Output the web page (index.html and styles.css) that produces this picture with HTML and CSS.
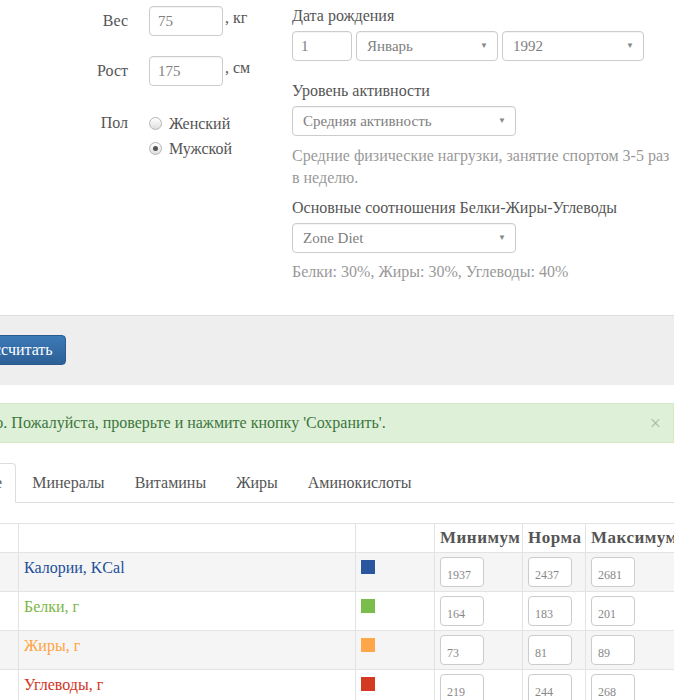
FILE: index.html
```html
<!DOCTYPE html>
<html lang="ru">
<head>
    <meta charset="UTF-8">
    <title>Калькулятор нормы</title>
    <link rel="stylesheet" href="styles.css">
</head>
<body>
    <div class="calc">
        <div class="body-params">
            <div class="field-row">
                <label class="field-label" for="weight">Вес</label>
                <input class="form-input short" id="weight" type="text" value="75">
                <span class="unit">, кг</span>
            </div>
            <div class="field-row">
                <label class="field-label" for="height">Рост</label>
                <input class="form-input short" id="height" type="text" value="175">
                <span class="unit">, см</span>
            </div>
            <div class="field-row gender">
                <span class="field-label">Пол</span>
                <div class="radio-list">
                    <label class="radio"><input type="radio" name="sex"> Женский</label>
                    <label class="radio"><input type="radio" name="sex" checked> Мужской</label>
                </div>
            </div>
        </div>

        <div class="profile">
            <div class="group-title">Дата рождения</div>
            <div class="date-row">
                <input class="form-input day" type="text" value="1">
                <div class="select-wrap month">
                    <select class="form-select"><option>Январь</option></select>
                </div>
                <div class="select-wrap year">
                    <select class="form-select"><option>1992</option></select>
                </div>
            </div>

            <div class="group-title spaced">Уровень активности</div>
            <div class="select-wrap wide">
                <select class="form-select"><option>Средняя активность</option></select>
            </div>
            <p class="help">Средние физические нагрузки, занятие спортом 3-5 раз в неделю.</p>

            <div class="group-title">Основные соотношения Белки-Жиры-Углеводы</div>
            <div class="select-wrap wide">
                <select class="form-select"><option>Zone Diet</option></select>
            </div>
            <p class="help ratio">Белки: 30%, Жиры: 30%, Углеводы: 40%</p>
        </div>
    </div>

    <div class="well">
        <button class="btn-primary" type="button">Рассчитать</button>
    </div>

    <div class="alert">
        <span class="alert-text">Рассчитано. Пожалуйста, проверьте и нажмите кнопку 'Сохранить'.</span>
        <button class="close" type="button">&times;</button>
    </div>

    <ul class="tabs">
        <li class="tab active">Основные</li>
        <li class="tab">Минералы</li>
        <li class="tab">Витамины</li>
        <li class="tab">Жиры</li>
        <li class="tab">Аминокислоты</li>
    </ul>

    <table class="norms">
        <thead>
            <tr>
                <th class="col-id"></th>
                <th class="col-name"></th>
                <th class="col-color"></th>
                <th class="col-min">Минимум</th>
                <th class="col-norm">Норма</th>
                <th class="col-max">Максимум</th>
            </tr>
        </thead>
        <tbody>
            <tr>
                <td></td>
                <td class="name kcal">Калории, KCal</td>
                <td><span class="swatch kcal-bg"></span></td>
                <td><input class="num-input" type="text" value="1937"></td>
                <td><input class="num-input" type="text" value="2437"></td>
                <td><input class="num-input" type="text" value="2681"></td>
            </tr>
            <tr>
                <td></td>
                <td class="name protein">Белки, г</td>
                <td><span class="swatch protein-bg"></span></td>
                <td><input class="num-input" type="text" value="164"></td>
                <td><input class="num-input" type="text" value="183"></td>
                <td><input class="num-input" type="text" value="201"></td>
            </tr>
            <tr>
                <td></td>
                <td class="name fat">Жиры, г</td>
                <td><span class="swatch fat-bg"></span></td>
                <td><input class="num-input" type="text" value="73"></td>
                <td><input class="num-input" type="text" value="81"></td>
                <td><input class="num-input" type="text" value="89"></td>
            </tr>
            <tr>
                <td></td>
                <td class="name carbs">Углеводы, г</td>
                <td><span class="swatch carbs-bg"></span></td>
                <td><input class="num-input" type="text" value="219"></td>
                <td><input class="num-input" type="text" value="244"></td>
                <td><input class="num-input" type="text" value="268"></td>
            </tr>
        </tbody>
    </table>
</body>
</html>
```

FILE: styles.css
```css
html, body {
    overflow: hidden;
}
body {
    margin: 0;
    font-family: "Liberation Serif", Tinos, serif;
    font-size: 16px;
    color: #555;
    background: #fff;
}
input, select, button {
    font-family: inherit;
}

/* top form */
.calc {
    display: flex;
    padding-top: 6px;
    height: 309px;
}
.body-params {
    width: 292px;
    flex-shrink: 0;
}
.field-row {
    display: grid;
    grid-template-columns: 128px 74px auto;
    column-gap: 21px;
    align-items: center;
    margin-bottom: 20px;
}
.field-label {
    text-align: right;
}
.unit {
    margin-left: -19px;
    margin-top: -6px;
}
.form-input, .form-select {
    box-sizing: border-box;
    height: 30px;
    padding: 4px 8px;
    border: 1px solid #ccc;
    border-radius: 4px;
    font-size: 15px;
    color: #808080;
    background: #fff;
    box-shadow: inset 0 1px 1px rgba(0, 0, 0, 0.05);
}
.form-input.short {
    width: 74px;
}
.field-row.gender {
    align-items: start;
    margin-top: 25px;
}
.gender .field-label {
    line-height: 24px;
}
.radio-list {
    display: flex;
    flex-direction: column;
}
.radio {
    display: flex;
    align-items: center;
    height: 25px;
    white-space: nowrap;
}
.radio input {
    appearance: none;
    flex-shrink: 0;
    box-sizing: border-box;
    width: 13px;
    height: 13px;
    margin: 0 7px 0 0;
    border: 1px solid #b5b5b5;
    border-radius: 50%;
    background: linear-gradient(#fff, #dedede);
    position: relative;
}
.radio input:checked::after {
    content: "";
    position: absolute;
    left: 3px;
    top: 3px;
    width: 5px;
    height: 5px;
    border-radius: 50%;
    background: #555;
}

.profile {
    width: 384px;
    flex-shrink: 0;
}
.group-title {
    line-height: 20px;
    margin-bottom: 5px;
}
.group-title.spaced {
    margin-top: 20px;
}
.date-row {
    display: flex;
    gap: 4px;
}
.form-input.day {
    width: 60px;
}
.select-wrap {
    position: relative;
}
.select-wrap::after {
    content: "\25BC";
    position: absolute;
    right: 10px;
    top: 10px;
    font-size: 8px;
    color: #888;
    pointer-events: none;
}
.form-select {
    appearance: none;
    width: 100%;
    padding-left: 10px;
}
.month, .year {
    width: 142px;
}
.wide {
    width: 224px;
}
.help {
    margin: 9px 0 9px;
    line-height: 22px;
    color: #999;
}
.help.ratio {
    margin-top: 8px;
}

/* recalc bar */
.well {
    background: #eee;
    border-top: 1px solid #ddd;
    padding: 19px 0 20px;
}
.btn-primary {
    margin-left: -35px;
    height: 30px;
    padding: 4px 12px;
    font-size: 16px;
    color: #fff;
    border: 1px solid #2a5a8e;
    border-radius: 4px;
    background: linear-gradient(#3d7ab8, #2c6096);
}

.alert {
    display: flex;
    justify-content: space-between;
    align-items: center;
    margin: 18px 0 0 -90px;
    height: 40px;
    box-sizing: border-box;
    padding: 0 12px 0 15px;
    background: #dff0d8;
    border: 1px solid #d6e9c6;
    color: #3c763d;
    white-space: nowrap;
}
.close {
    border: none;
    background: none;
    padding: 0;
    font-size: 20px;
    color: #aab8a4;
}

/* tabs */
.tabs {
    display: flex;
    list-style: none;
    margin: 20px 0 0 -81px;
    padding: 0;
    border-bottom: 1px solid #ddd;
}
.tab {
    padding: 0 13px;
    line-height: 38px;
    margin-right: 2px;
    border: 1px solid transparent;
    border-radius: 4px 4px 0 0;
    margin-bottom: -1px;
    white-space: nowrap;
}
.tab.active {
    background: #fff;
    border-color: #ddd #ddd #fff;
}

/* table */
.norms {
    margin: 20px 0 0 -100px;
    border-collapse: collapse;
    table-layout: fixed;
    width: 780px;
}
.norms th, .norms td {
    box-sizing: border-box;
    border: 1px solid #e3e3e3;
    padding: 4px 5px;
    height: 39px;
    vertical-align: top;
    text-align: left;
}
.norms th {
    height: 29px;
    font-size: 17px;
    font-weight: bold;
    letter-spacing: 0.5px;
    line-height: 20px;
    padding: 4px 5px 3px;
    white-space: nowrap;
}
.norms tbody tr:nth-child(odd) {
    background: #f5f5f5;
}
.col-id { width: 118px; }
.col-name { width: 337px; }
.col-color { width: 79px; }
.col-min { width: 88px; }
.col-norm { width: 63px; }
.col-max { width: 95px; }
.name {
    line-height: 22px;
    padding-top: 3px;
}
.kcal { color: #234f98; }
.protein { color: #7ab648; }
.fat { color: #ffa443; }
.carbs { color: #d1331c; }
.swatch {
    display: block;
    width: 14px;
    height: 14px;
    margin-top: 3px;
}
.kcal-bg { background: #2a56a0; }
.protein-bg { background: #7bbd4a; }
.fat-bg { background: #ffa54a; }
.carbs-bg { background: #d43a22; }
.num-input {
    box-sizing: border-box;
    width: 44px;
    height: 30px;
    padding: 6px 6px 0;
    border: 1px solid #ccc;
    border-radius: 4px;
    font-size: 12px;
    color: #888;
}
```
